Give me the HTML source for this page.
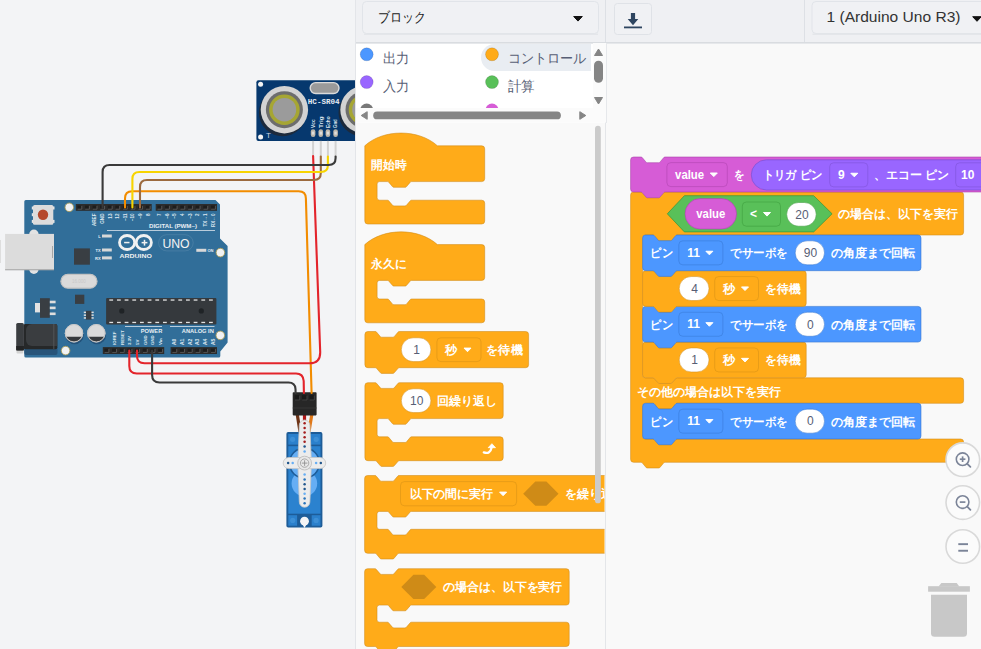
<!DOCTYPE html>
<html><head><meta charset="utf-8"><style>
html,body{margin:0;padding:0;width:981px;height:649px;overflow:hidden;background:#f3f4f6;}
svg{display:block;font-family:"Liberation Sans", sans-serif;}
</style></head><body>
<svg width="981" height="649" viewBox="0 0 981 649">
<rect x="0" y="0" width="981" height="649" fill="#f3f4f6"/>
<g>
<rect x="256.4" y="80.2" width="130" height="60.7" rx="2" fill="#06386e"/>
<circle cx="260.6" cy="84.2" r="2.5" fill="#f4f4f4"/>
<circle cx="260.6" cy="137" r="2.5" fill="#f4f4f4"/>
<circle cx="282.59999999999997" cy="112.6" r="23.7" fill="#1c2a3c"/>
<circle cx="284.4" cy="109.7" r="23.7" fill="#d3d3d3"/>
<circle cx="284.4" cy="109.7" r="18.5" fill="#6d6d6d"/>
<circle cx="284.4" cy="109.7" r="15.3" fill="#a6a633"/>
<circle cx="284.4" cy="109.7" r="11.8" fill="#9b9b9b"/>
<circle cx="362.2" cy="112.6" r="23.7" fill="#1c2a3c"/>
<circle cx="364.0" cy="109.7" r="23.7" fill="#d3d3d3"/>
<circle cx="364.0" cy="109.7" r="18.5" fill="#6d6d6d"/>
<circle cx="364.0" cy="109.7" r="15.3" fill="#a6a633"/>
<circle cx="364.0" cy="109.7" r="11.8" fill="#9b9b9b"/>
<rect x="310.2" y="82.6" width="28.8" height="10.9" rx="5.45" fill="#9a9a9a" stroke="#dadada" stroke-width="1.4"/>
<text x="307.8" y="103.6" font-family="Liberation Mono, monospace" font-size="7.6" font-weight="bold" fill="#e8ecf2" textLength="31.8" lengthAdjust="spacingAndGlyphs">HC-SR04</text>
<text x="266" y="137.5" font-size="8" fill="#c9d3df">T</text>
<text transform="translate(314.8,128) rotate(-90)" font-size="4.6" font-weight="bold" fill="#dfe6ee" textLength="8.7" lengthAdjust="spacingAndGlyphs">Vcc</text>
<rect x="310.8" y="129.3" width="4.6" height="7.6" rx="2.2" fill="#bdb6aa"/>
<rect x="311.90000000000003" y="131.6" width="2.4" height="3" fill="#dedede"/>
<rect x="312.1" y="140.9" width="2" height="16" fill="#d2d2d2"/>
<text transform="translate(322.5,128) rotate(-90)" font-size="4.6" font-weight="bold" fill="#dfe6ee" textLength="11.6" lengthAdjust="spacingAndGlyphs">Trig</text>
<rect x="318.5" y="129.3" width="4.6" height="7.6" rx="2.2" fill="#bdb6aa"/>
<rect x="319.6" y="131.6" width="2.4" height="3" fill="#dedede"/>
<rect x="319.8" y="140.9" width="2" height="16" fill="#d2d2d2"/>
<text transform="translate(329.59999999999997,128) rotate(-90)" font-size="4.6" font-weight="bold" fill="#dfe6ee" textLength="11.6" lengthAdjust="spacingAndGlyphs">Echo</text>
<rect x="325.59999999999997" y="129.3" width="4.6" height="7.6" rx="2.2" fill="#bdb6aa"/>
<rect x="326.7" y="131.6" width="2.4" height="3" fill="#dedede"/>
<rect x="326.9" y="140.9" width="2" height="16" fill="#d2d2d2"/>
<text transform="translate(337.3,128) rotate(-90)" font-size="4.6" font-weight="bold" fill="#dfe6ee" textLength="8.7" lengthAdjust="spacingAndGlyphs">Gnd</text>
<rect x="333.3" y="129.3" width="4.6" height="7.6" rx="2.2" fill="#bdb6aa"/>
<rect x="334.40000000000003" y="131.6" width="2.4" height="3" fill="#dedede"/>
<rect x="334.6" y="140.9" width="2" height="16" fill="#d2d2d2"/>
</g>
<path d="M25.8,200 H215.5 L220,204.5 V238.6 L227.6,246.1 V342.6 L220.3,351.5 V356 a1.5,1.5 0 0 1 -1.5,1.5 H25.8 a1.5,1.5 0 0 1 -1.5,-1.5 V201.5 a1.5,1.5 0 0 1 1.5,-1.5 Z" fill="#316e99"/>
<rect x="75.8" y="204" width="75.9" height="6.8" fill="#2c2c2c"/>
<rect x="77.4" y="205.5" width="4.39" height="3.8" fill="#1d1d1d"/>
<path d="M77.6,209.2 H81.79 V205.8" fill="none" stroke="#5a5a5a" stroke-width="0.9"/>
<rect x="84.99" y="205.5" width="4.39" height="3.8" fill="#1d1d1d"/>
<path d="M85.19,209.2 H89.38 V205.8" fill="none" stroke="#5a5a5a" stroke-width="0.9"/>
<rect x="92.58" y="205.5" width="4.39" height="3.8" fill="#1d1d1d"/>
<path d="M92.78,209.2 H96.97 V205.8" fill="none" stroke="#5a5a5a" stroke-width="0.9"/>
<rect x="100.17" y="205.5" width="4.39" height="3.8" fill="#1d1d1d"/>
<path d="M100.37,209.2 H104.56 V205.8" fill="none" stroke="#5a5a5a" stroke-width="0.9"/>
<rect x="107.76" y="205.5" width="4.39" height="3.8" fill="#1d1d1d"/>
<path d="M107.96,209.2 H112.15 V205.8" fill="none" stroke="#5a5a5a" stroke-width="0.9"/>
<rect x="115.35" y="205.5" width="4.39" height="3.8" fill="#1d1d1d"/>
<path d="M115.55,209.2 H119.74 V205.8" fill="none" stroke="#5a5a5a" stroke-width="0.9"/>
<rect x="122.94" y="205.5" width="4.39" height="3.8" fill="#1d1d1d"/>
<path d="M123.14,209.2 H127.33 V205.8" fill="none" stroke="#5a5a5a" stroke-width="0.9"/>
<rect x="130.53" y="205.5" width="4.39" height="3.8" fill="#1d1d1d"/>
<path d="M130.73,209.2 H134.92 V205.8" fill="none" stroke="#5a5a5a" stroke-width="0.9"/>
<rect x="138.12" y="205.5" width="4.39" height="3.8" fill="#1d1d1d"/>
<path d="M138.32,209.2 H142.51 V205.8" fill="none" stroke="#5a5a5a" stroke-width="0.9"/>
<rect x="145.71" y="205.5" width="4.39" height="3.8" fill="#1d1d1d"/>
<path d="M145.91,209.2 H150.1 V205.8" fill="none" stroke="#5a5a5a" stroke-width="0.9"/>
<rect x="155.7" y="204" width="61.3" height="6.8" fill="#2c2c2c"/>
<rect x="157.3" y="205.5" width="4.46" height="3.8" fill="#1d1d1d"/>
<path d="M157.5,209.2 H161.76 V205.8" fill="none" stroke="#5a5a5a" stroke-width="0.9"/>
<rect x="164.96" y="205.5" width="4.46" height="3.8" fill="#1d1d1d"/>
<path d="M165.16,209.2 H169.42 V205.8" fill="none" stroke="#5a5a5a" stroke-width="0.9"/>
<rect x="172.62" y="205.5" width="4.46" height="3.8" fill="#1d1d1d"/>
<path d="M172.82,209.2 H177.09 V205.8" fill="none" stroke="#5a5a5a" stroke-width="0.9"/>
<rect x="180.29" y="205.5" width="4.46" height="3.8" fill="#1d1d1d"/>
<path d="M180.49,209.2 H184.75 V205.8" fill="none" stroke="#5a5a5a" stroke-width="0.9"/>
<rect x="187.95" y="205.5" width="4.46" height="3.8" fill="#1d1d1d"/>
<path d="M188.15,209.2 H192.41 V205.8" fill="none" stroke="#5a5a5a" stroke-width="0.9"/>
<rect x="195.61" y="205.5" width="4.46" height="3.8" fill="#1d1d1d"/>
<path d="M195.81,209.2 H200.07 V205.8" fill="none" stroke="#5a5a5a" stroke-width="0.9"/>
<rect x="203.28" y="205.5" width="4.46" height="3.8" fill="#1d1d1d"/>
<path d="M203.48,209.2 H207.74 V205.8" fill="none" stroke="#5a5a5a" stroke-width="0.9"/>
<rect x="210.94" y="205.5" width="4.46" height="3.8" fill="#1d1d1d"/>
<path d="M211.14,209.2 H215.4 V205.8" fill="none" stroke="#5a5a5a" stroke-width="0.9"/>
<rect x="102.8" y="347.1" width="61.4" height="6.9" fill="#2c2c2c"/>
<rect x="104.4" y="348.6" width="4.47" height="3.9" fill="#1d1d1d"/>
<path d="M104.6,352.4 H108.88 V348.9" fill="none" stroke="#5a5a5a" stroke-width="0.9"/>
<rect x="112.07" y="348.6" width="4.47" height="3.9" fill="#1d1d1d"/>
<path d="M112.27,352.4 H116.55 V348.9" fill="none" stroke="#5a5a5a" stroke-width="0.9"/>
<rect x="119.75" y="348.6" width="4.47" height="3.9" fill="#1d1d1d"/>
<path d="M119.95,352.4 H124.22 V348.9" fill="none" stroke="#5a5a5a" stroke-width="0.9"/>
<rect x="127.42" y="348.6" width="4.47" height="3.9" fill="#1d1d1d"/>
<path d="M127.62,352.4 H131.9 V348.9" fill="none" stroke="#5a5a5a" stroke-width="0.9"/>
<rect x="135.1" y="348.6" width="4.47" height="3.9" fill="#1d1d1d"/>
<path d="M135.3,352.4 H139.58 V348.9" fill="none" stroke="#5a5a5a" stroke-width="0.9"/>
<rect x="142.77" y="348.6" width="4.47" height="3.9" fill="#1d1d1d"/>
<path d="M142.97,352.4 H147.25 V348.9" fill="none" stroke="#5a5a5a" stroke-width="0.9"/>
<rect x="150.45" y="348.6" width="4.47" height="3.9" fill="#1d1d1d"/>
<path d="M150.65,352.4 H154.93 V348.9" fill="none" stroke="#5a5a5a" stroke-width="0.9"/>
<rect x="158.12" y="348.6" width="4.47" height="3.9" fill="#1d1d1d"/>
<path d="M158.32,352.4 H162.6 V348.9" fill="none" stroke="#5a5a5a" stroke-width="0.9"/>
<rect x="170.6" y="347.1" width="46.4" height="6.9" fill="#2c2c2c"/>
<rect x="172.2" y="348.6" width="4.53" height="3.9" fill="#1d1d1d"/>
<path d="M172.4,352.4 H176.73 V348.9" fill="none" stroke="#5a5a5a" stroke-width="0.9"/>
<rect x="179.93" y="348.6" width="4.53" height="3.9" fill="#1d1d1d"/>
<path d="M180.13,352.4 H184.47 V348.9" fill="none" stroke="#5a5a5a" stroke-width="0.9"/>
<rect x="187.67" y="348.6" width="4.53" height="3.9" fill="#1d1d1d"/>
<path d="M187.87,352.4 H192.2 V348.9" fill="none" stroke="#5a5a5a" stroke-width="0.9"/>
<rect x="195.4" y="348.6" width="4.53" height="3.9" fill="#1d1d1d"/>
<path d="M195.6,352.4 H199.93 V348.9" fill="none" stroke="#5a5a5a" stroke-width="0.9"/>
<rect x="203.13" y="348.6" width="4.53" height="3.9" fill="#1d1d1d"/>
<path d="M203.33,352.4 H207.67 V348.9" fill="none" stroke="#5a5a5a" stroke-width="0.9"/>
<rect x="210.87" y="348.6" width="4.53" height="3.9" fill="#1d1d1d"/>
<path d="M211.07,352.4 H215.4 V348.9" fill="none" stroke="#5a5a5a" stroke-width="0.9"/>
<circle cx="69.3" cy="207.3" r="4.3" fill="#f1f2f3" stroke="#a69a58" stroke-width="0.9"/>
<circle cx="220.4" cy="252.6" r="4.3" fill="#f1f2f3" stroke="#a69a58" stroke-width="0.9"/>
<circle cx="220.3" cy="335.4" r="4.3" fill="#f1f2f3" stroke="#a69a58" stroke-width="0.9"/>
<circle cx="65.6" cy="350.6" r="4.3" fill="#f1f2f3" stroke="#a69a58" stroke-width="0.9"/>
<rect x="31.8" y="206.5" width="2" height="3" fill="#e6e6e6"/><rect x="31.8" y="213.2" width="2" height="3" fill="#e6e6e6"/><rect x="31.8" y="219.9" width="2" height="3" fill="#e6e6e6"/>
<rect x="52.5" y="206.5" width="2" height="3" fill="#e6e6e6"/><rect x="52.5" y="219.9" width="2" height="3" fill="#e6e6e6"/>
<rect x="33" y="205.1" width="20.3" height="19.7" rx="1.5" fill="#dcdcdc"/>
<circle cx="43" cy="214.8" r="5.2" fill="#b5482b"/>
<circle cx="33.9" cy="234.2" r="4.7" fill="#e2e2e2"/><circle cx="33.9" cy="269.3" r="4.7" fill="#e2e2e2"/>
<rect x="5.1" y="233.9" width="48.9" height="36" fill="#dcdcdc"/>
<rect x="5.1" y="269.2" width="48.9" height="1.1" fill="#a9a9a9"/>
<rect x="52" y="246" width="0.9" height="12" fill="#a0a0a0"/>
<rect x="0" y="240" width="1" height="23" fill="#dedede"/>
<rect x="74" y="248.4" width="15.9" height="16.3" fill="#393e43"/>
<rect x="75" y="294.7" width="9.3" height="9.2" fill="#393e43"/>
<rect x="102" y="234.5" width="9.8" height="3" fill="#d8d8d8"/>
<text x="100.6" y="237.6" font-size="4" font-weight="bold" fill="#e6eef5" text-anchor="end">L</text>
<rect x="102" y="248.5" width="9.8" height="3" fill="#d8d8d8"/>
<text x="100.6" y="251.6" font-size="4" font-weight="bold" fill="#e6eef5" text-anchor="end">TX</text>
<rect x="102" y="256.4" width="9.8" height="3" fill="#d8d8d8"/>
<text x="100.6" y="259.5" font-size="4" font-weight="bold" fill="#e6eef5" text-anchor="end">RX</text>
<rect x="196.3" y="248.8" width="10" height="3" fill="#d8d8d8"/>
<text x="207.5" y="251.9" font-size="4" font-weight="bold" fill="#e6eef5">ON</text>
<rect x="60.9" y="274.3" width="36.1" height="13.9" rx="6.95" fill="#dadada" stroke="#c2c2c2" stroke-width="1.2"/>
<text x="79" y="283" font-size="4.5" fill="#c8c8c8" text-anchor="middle">16.000</text>
<rect x="35" y="303" width="5.2" height="9.4" fill="#e2e2e2"/>
<rect x="40" y="298.2" width="9.8" height="19.6" fill="#393e43"/>
<rect x="49.8" y="300.7" width="5.8" height="2.6" fill="#dedede"/>
<rect x="49.8" y="306.6" width="5.8" height="2.6" fill="#dedede"/>
<rect x="49.8" y="312.5" width="5.8" height="2.6" fill="#dedede"/>
<rect x="85.8" y="310.8" width="5.8" height="8.8" fill="#393e43"/>
<rect x="83.8" y="311.6" width="2.2" height="1.5" fill="#dedede"/><rect x="91.5" y="311.6" width="2.2" height="1.5" fill="#dedede"/>
<rect x="83.8" y="314.4" width="2.2" height="1.5" fill="#dedede"/><rect x="91.5" y="314.4" width="2.2" height="1.5" fill="#dedede"/>
<rect x="83.8" y="317.2" width="2.2" height="1.5" fill="#dedede"/><rect x="91.5" y="317.2" width="2.2" height="1.5" fill="#dedede"/>
<rect x="24.3" y="345" width="33.2" height="10" rx="2" fill="#285479"/>
<rect x="16.5" y="349" width="6.8" height="4.6" rx="1" fill="#d2d2d2"/>
<rect x="23.5" y="324" width="33.8" height="25.2" rx="1.8" fill="#262829"/>
<path d="M32,324 H55.5 a1.8,1.8 0 0 1 1.8,1.8 V346 H32 a6,6 0 0 1 -6,-6 V330 a6,6 0 0 1 6,-6 Z" fill="#3a3d40"/>
<rect x="53.4" y="324" width="0.9" height="25" fill="#55585b"/>
<rect x="16.2" y="323" width="7.7" height="27.4" rx="1.5" fill="#3a3d40"/>
<rect x="16.2" y="346" width="7.7" height="4.4" fill="#232425"/>
<circle cx="74.6" cy="335" r="9.2" fill="#23527a"/>
<circle cx="74.0" cy="333.2" r="9.2" fill="#dadada"/>
<path d="M65.7,336.8 H82.3 A9.2,9.2 0 0 1 65.7,336.8 Z" fill="#36393c"/>
<circle cx="74.0" cy="333.2" r="8.7" fill="none" stroke="#c6c6c6" stroke-width="1"/>
<circle cx="96.89999999999999" cy="335" r="9.2" fill="#23527a"/>
<circle cx="96.3" cy="333.2" r="9.2" fill="#dadada"/>
<path d="M88,336.8 H104.6 A9.2,9.2 0 0 1 88,336.8 Z" fill="#36393c"/>
<circle cx="96.3" cy="333.2" r="8.7" fill="none" stroke="#c6c6c6" stroke-width="1"/>
<rect x="106.1" y="298.1" width="110.3" height="26.3" rx="1" fill="#35393d"/>
<rect x="109.3" y="299.4" width="3.8" height="1.3" fill="#e2e2e2"/>
<rect x="109.3" y="321.8" width="3.8" height="1.3" fill="#e2e2e2"/>
<rect x="116.97" y="299.4" width="3.8" height="1.3" fill="#e2e2e2"/>
<rect x="116.97" y="321.8" width="3.8" height="1.3" fill="#e2e2e2"/>
<rect x="124.64" y="299.4" width="3.8" height="1.3" fill="#e2e2e2"/>
<rect x="124.64" y="321.8" width="3.8" height="1.3" fill="#e2e2e2"/>
<rect x="132.31" y="299.4" width="3.8" height="1.3" fill="#e2e2e2"/>
<rect x="132.31" y="321.8" width="3.8" height="1.3" fill="#e2e2e2"/>
<rect x="139.98" y="299.4" width="3.8" height="1.3" fill="#e2e2e2"/>
<rect x="139.98" y="321.8" width="3.8" height="1.3" fill="#e2e2e2"/>
<rect x="147.65" y="299.4" width="3.8" height="1.3" fill="#e2e2e2"/>
<rect x="147.65" y="321.8" width="3.8" height="1.3" fill="#e2e2e2"/>
<rect x="155.32" y="299.4" width="3.8" height="1.3" fill="#e2e2e2"/>
<rect x="155.32" y="321.8" width="3.8" height="1.3" fill="#e2e2e2"/>
<rect x="162.99" y="299.4" width="3.8" height="1.3" fill="#e2e2e2"/>
<rect x="162.99" y="321.8" width="3.8" height="1.3" fill="#e2e2e2"/>
<rect x="170.66" y="299.4" width="3.8" height="1.3" fill="#e2e2e2"/>
<rect x="170.66" y="321.8" width="3.8" height="1.3" fill="#e2e2e2"/>
<rect x="178.33" y="299.4" width="3.8" height="1.3" fill="#e2e2e2"/>
<rect x="178.33" y="321.8" width="3.8" height="1.3" fill="#e2e2e2"/>
<rect x="186" y="299.4" width="3.8" height="1.3" fill="#e2e2e2"/>
<rect x="186" y="321.8" width="3.8" height="1.3" fill="#e2e2e2"/>
<rect x="193.67" y="299.4" width="3.8" height="1.3" fill="#e2e2e2"/>
<rect x="193.67" y="321.8" width="3.8" height="1.3" fill="#e2e2e2"/>
<rect x="201.34" y="299.4" width="3.8" height="1.3" fill="#e2e2e2"/>
<rect x="201.34" y="321.8" width="3.8" height="1.3" fill="#e2e2e2"/>
<rect x="209.01" y="299.4" width="3.8" height="1.3" fill="#e2e2e2"/>
<rect x="209.01" y="321.8" width="3.8" height="1.3" fill="#e2e2e2"/>
<circle cx="121.8" cy="310.9" r="2.6" fill="#1f2326"/><circle cx="201.3" cy="310.9" r="2.6" fill="#1f2326"/>
<ellipse cx="127.1" cy="242.5" rx="7.6" ry="7.0" fill="none" stroke="#f1f1f1" stroke-width="2.8"/>
<ellipse cx="143.8" cy="242.5" rx="7.6" ry="7.0" fill="none" stroke="#f1f1f1" stroke-width="2.8"/>
<rect x="124.1" y="241.8" width="5.4" height="1.5" fill="#f1f1f1"/>
<rect x="141.6" y="241.9" width="5.8" height="1.5" fill="#f1f1f1"/><rect x="143.75" y="239.8" width="1.5" height="5.8" fill="#f1f1f1"/>
<text x="119.6" y="257.7" font-size="5.6" font-weight="bold" fill="#f1f1f1" textLength="32.3" lengthAdjust="spacingAndGlyphs">ARDUINO</text>
<rect x="158.6" y="234.7" width="34.6" height="16.2" rx="8.1" fill="none" stroke="#ffffff" stroke-opacity="0.1" stroke-width="1"/>
<text x="162.4" y="247.7" font-size="13.6" fill="#f3f3f3" textLength="27.2" lengthAdjust="spacingAndGlyphs">UNO</text>
<text transform="translate(96.38,213.5) rotate(-90)" font-size="4.6" font-weight="bold" fill="#dfe8f0" text-anchor="end">AREF</text>
<text transform="translate(103.97,213.5) rotate(-90)" font-size="4.6" font-weight="bold" fill="#dfe8f0" text-anchor="end">GND</text>
<text transform="translate(111.56,213.5) rotate(-90)" font-size="4.6" font-weight="bold" fill="#dfe8f0" text-anchor="end">13</text>
<text transform="translate(119.15,213.5) rotate(-90)" font-size="4.6" font-weight="bold" fill="#dfe8f0" text-anchor="end">12</text>
<text transform="translate(126.74,213.5) rotate(-90)" font-size="4.6" font-weight="bold" fill="#dfe8f0" text-anchor="end">~11</text>
<text transform="translate(134.33,213.5) rotate(-90)" font-size="4.6" font-weight="bold" fill="#dfe8f0" text-anchor="end">~10</text>
<text transform="translate(141.92,213.5) rotate(-90)" font-size="4.6" font-weight="bold" fill="#dfe8f0" text-anchor="end">~9</text>
<text transform="translate(149.51,213.5) rotate(-90)" font-size="4.6" font-weight="bold" fill="#dfe8f0" text-anchor="end">8</text>
<text transform="translate(161.1,213.5) rotate(-90)" font-size="4.6" font-weight="bold" fill="#dfe8f0" text-anchor="end">7</text>
<text transform="translate(168.76,213.5) rotate(-90)" font-size="4.6" font-weight="bold" fill="#dfe8f0" text-anchor="end">~6</text>
<text transform="translate(176.42,213.5) rotate(-90)" font-size="4.6" font-weight="bold" fill="#dfe8f0" text-anchor="end">~5</text>
<text transform="translate(184.08,213.5) rotate(-90)" font-size="4.6" font-weight="bold" fill="#dfe8f0" text-anchor="end">4</text>
<text transform="translate(191.74,213.5) rotate(-90)" font-size="4.6" font-weight="bold" fill="#dfe8f0" text-anchor="end">~3</text>
<text transform="translate(199.4,213.5) rotate(-90)" font-size="4.6" font-weight="bold" fill="#dfe8f0" text-anchor="end">2</text>
<text transform="translate(207.06,213.5) rotate(-90)" font-size="4.6" font-weight="bold" fill="#dfe8f0" text-anchor="end">TX→1</text>
<text transform="translate(214.72,213.5) rotate(-90)" font-size="4.6" font-weight="bold" fill="#dfe8f0" text-anchor="end">RX←0</text>
<text x="173" y="228.3" font-size="5.6" font-weight="bold" fill="#e8eef4" text-anchor="middle" textLength="48" lengthAdjust="spacingAndGlyphs">DIGITAL (PWM~)</text>
<rect x="107" y="230" width="108" height="0.9" fill="#c9d7e3"/>
<text transform="translate(115.87,345) rotate(-90)" font-size="4.4" font-weight="bold" fill="#dfe8f0">IOREF</text>
<text transform="translate(123.54,345) rotate(-90)" font-size="4.4" font-weight="bold" fill="#dfe8f0">RESET</text>
<text transform="translate(131.21,345) rotate(-90)" font-size="4.4" font-weight="bold" fill="#dfe8f0">3.3V</text>
<text transform="translate(138.88,345) rotate(-90)" font-size="4.4" font-weight="bold" fill="#dfe8f0">5V</text>
<text transform="translate(146.55,345) rotate(-90)" font-size="4.4" font-weight="bold" fill="#dfe8f0">GND</text>
<text transform="translate(154.22,345) rotate(-90)" font-size="4.4" font-weight="bold" fill="#dfe8f0">GND</text>
<text transform="translate(161.89,345) rotate(-90)" font-size="4.4" font-weight="bold" fill="#dfe8f0">Vin</text>
<text transform="translate(176.3,345) rotate(-90)" font-size="5" font-weight="bold" fill="#dfe8f0">A0</text>
<text transform="translate(184.03,345) rotate(-90)" font-size="5" font-weight="bold" fill="#dfe8f0">A1</text>
<text transform="translate(191.76,345) rotate(-90)" font-size="5" font-weight="bold" fill="#dfe8f0">A2</text>
<text transform="translate(199.49,345) rotate(-90)" font-size="5" font-weight="bold" fill="#dfe8f0">A3</text>
<text transform="translate(207.22,345) rotate(-90)" font-size="5" font-weight="bold" fill="#dfe8f0">A4</text>
<text transform="translate(214.95,345) rotate(-90)" font-size="5" font-weight="bold" fill="#dfe8f0">A5</text>
<rect x="125" y="326" width="37" height="0.9" fill="#c9d7e3"/><rect x="170" y="326" width="44.5" height="0.9" fill="#c9d7e3"/>
<text x="151.5" y="333" font-size="6" font-weight="bold" fill="#e8eef4" text-anchor="middle" textLength="21.5" lengthAdjust="spacingAndGlyphs">POWER</text>
<text x="197.8" y="333" font-size="6" font-weight="bold" fill="#e8eef4" text-anchor="middle" textLength="32" lengthAdjust="spacingAndGlyphs">ANALOG IN</text>
<path d="M297.2,414 L300.2,433" stroke="#6e3417" stroke-width="3.2"/>
<path d="M311.9,414 L308.8,433" stroke="#e07818" stroke-width="3.2"/>
<path d="M304.5,414 V426" stroke="#b01818" stroke-width="3.2"/>
<rect x="286.4" y="432.1" width="36" height="95.4" rx="1.8" fill="#1d5c98"/>
<rect x="288.3" y="434" width="32.2" height="10.6" fill="#2b80cc"/>
<circle cx="292.6" cy="439.3" r="2.6" fill="#3d8fd6"/><circle cx="316.2" cy="439.3" r="2.6" fill="#3d8fd6"/>
<rect x="288.3" y="446.2" width="32.2" height="67.5" fill="#2b82cf"/>
<circle cx="304.4" cy="483.5" r="12.8" fill="#66aef4"/>
<circle cx="304.4" cy="463.1" r="15" fill="#66aef4" stroke="#1d5c98" stroke-width="1.6"/>
<rect x="288.3" y="515.2" width="8.8" height="10.5" fill="#2b80cc"/><rect x="311.7" y="515.2" width="8.8" height="10.5" fill="#2b80cc"/>
<circle cx="292.7" cy="520.4" r="2.6" fill="#3d8fd6"/><circle cx="316.1" cy="520.4" r="2.6" fill="#3d8fd6"/>
<circle cx="304.5" cy="521.2" r="4.4" fill="#f3f4f6"/><path d="M302.3,524 L304.5,528 L306.7,524 Z" fill="#f3f4f6"/>
<path d="M299.3,425.3 A5.3,5.3 0 0 1 309.9,425.3 L311.4,463 L309.9,501.9 A5.3,5.3 0 0 1 299.3,501.9 L297.8,463 Z" fill="#ececec" stroke="#c6c6c6" stroke-width="0.8"/>
<rect x="283.2" y="457.5" width="42.5" height="11.1" rx="5.55" fill="#ececec" stroke="#c6c6c6" stroke-width="0.8"/>
<rect x="298.4" y="458" width="12.4" height="10.1" fill="#ececec"/>
<circle cx="304.6" cy="463.1" r="6.9" fill="#e8e8e8" stroke="#b8b8b8" stroke-width="0.8"/>
<circle cx="304.6" cy="463.1" r="4.2" fill="none" stroke="#999" stroke-width="0.8"/>
<path d="M301.8,463.1 h5.6 M304.6,460.3 v5.6" stroke="#888" stroke-width="0.8"/>
<circle cx="304.6" cy="423.3" r="1.25" fill="#a41d1d"/>
<circle cx="304.6" cy="427.9" r="1.25" fill="#a41d1d"/>
<circle cx="304.6" cy="432.6" r="1.25" fill="#a41d1d"/>
<circle cx="304.6" cy="437.2" r="1.25" fill="#a41d1d"/>
<circle cx="304.6" cy="441.8" r="1.25" fill="#a41d1d"/>
<circle cx="304.6" cy="446.4" r="1.25" fill="#21568c"/>
<circle cx="304.6" cy="451.5" r="1.25" fill="#66aef4"/>
<circle cx="304.6" cy="474.6" r="1.25" fill="#66aef4"/>
<circle cx="304.6" cy="479.4" r="1.25" fill="#2a74bb"/>
<circle cx="304.6" cy="484.3" r="1.25" fill="#21568c"/>
<circle cx="304.6" cy="489" r="1.25" fill="#21568c"/>
<circle cx="304.6" cy="493.7" r="1.25" fill="#66aef4"/>
<circle cx="304.6" cy="498.4" r="1.25" fill="#2a74bb"/>
<circle cx="304.6" cy="503.2" r="1.25" fill="#2a74bb"/>
<circle cx="288.1" cy="463.1" r="1.25" fill="#21568c"/>
<circle cx="292.7" cy="463.1" r="1.25" fill="#66aef4"/>
<circle cx="316.1" cy="463.1" r="1.25" fill="#66aef4"/>
<circle cx="320.8" cy="463.1" r="1.25" fill="#21568c"/>
<rect x="292.7" y="392.3" width="23.9" height="23.1" rx="0.8" fill="#272727"/>
<rect x="294.7" y="395.2" width="5.2" height="5" fill="#1a1a1a"/>
<path d="M294.90000000000003,400 H299.7 V395.5" fill="none" stroke="#4a4a4a" stroke-width="0.8"/>
<rect x="302.0" y="395.2" width="5.2" height="5" fill="#1a1a1a"/>
<path d="M302.20000000000005,400 H307.0 V395.5" fill="none" stroke="#4a4a4a" stroke-width="0.8"/>
<rect x="309.29999999999995" y="395.2" width="5.2" height="5" fill="#1a1a1a"/>
<path d="M309.5,400 H314.29999999999995 V395.5" fill="none" stroke="#4a4a4a" stroke-width="0.8"/>
<rect x="292.7" y="407.6" width="23.9" height="0.8" fill="#3a3a3a"/>
<path d="M125,207.5 V198.5 Q125,191.3 132.2,191.3 H298.6 Q305.9,191.3 305.9,198.6 L311.6,393" stroke="#f28c00" fill="none" stroke-width="2.1" stroke-linecap="round" stroke-linejoin="round"/>
<path d="M313.1,156 L320.2,352 Q320.4,363.3 309.5,363.3 H144.5 Q137,363.3 137,355.8 V350.5" stroke="#e3242b" fill="none" stroke-width="2.1" stroke-linecap="round" stroke-linejoin="round"/>
<path d="M129.3,350.5 V366 Q129.3,373.5 136.8,373.5 H296 Q303.2,373.5 303.7,381 L303.9,393" stroke="#e3242b" fill="none" stroke-width="2.1" stroke-linecap="round" stroke-linejoin="round"/>
<path d="M152.1,350.5 V375 Q152.1,382.5 159.6,382.5 H288.5 Q295.2,382.5 295.5,389 L295.6,393" stroke="#3a3a3a" fill="none" stroke-width="2.1" stroke-linecap="round" stroke-linejoin="round"/>
<path d="M320.8,156.5 V173 Q320.8,180 313.8,180 H147 Q140,180 140,187 V207.5" stroke="#9c6a3e" fill="none" stroke-width="2.1" stroke-linecap="round" stroke-linejoin="round"/>
<path d="M327.9,156.5 V165 Q327.9,172 320.9,172 H139.4 Q132.4,172 132.4,179 V207.5" stroke="#f7d400" fill="none" stroke-width="2.1" stroke-linecap="round" stroke-linejoin="round"/>
<path d="M335.6,156.5 V158 Q335.6,165 328.6,165 H109.6 Q102.6,165 102.6,172 V207.5" stroke="#3a3a3a" fill="none" stroke-width="2.1" stroke-linecap="round" stroke-linejoin="round"/>
<rect x="355" y="0" width="626" height="649" fill="#f9f9f9"/>
<rect x="355" y="0" width="1" height="649" fill="#e3e5e9"/>
<rect x="356" y="0" width="625" height="42" fill="#eff0f3"/>
<rect x="356" y="42" width="625" height="1" fill="#d9dce0"/><rect x="356" y="43" width="625" height="1" fill="#e6e8eb"/>
<rect x="362.5" y="1.5" width="236" height="32" rx="4" fill="#f0f1f4" stroke="#e1e4e9" stroke-width="1"/>
<rect x="364" y="33.5" width="234" height="1.5" fill="#e4e6ea"/>
<text x="377.5" y="22" font-size="14" fill="#222" font-weight="normal" text-anchor="start" textLength="48" lengthAdjust="spacingAndGlyphs" >ブロック</text>
<path d="M573.7,16.5 L582.3,16.5 L578,21.1 Z" fill="#111" stroke="#111" stroke-width="1" stroke-linejoin="round"/>
<rect x="605" y="0" width="1" height="42" fill="#dde0e5"/>
<rect x="614.5" y="3.5" width="37" height="31" rx="3" fill="#f0f1f4" stroke="#dfe2e7" stroke-width="1"/>
<path d="M630.9,13 h4.2 v6 h3.2 l-5.3,6.3 l-5.3,-6.3 h3.2 Z" fill="#2e4560"/>
<rect x="624" y="26.5" width="18" height="1.8" fill="#2e4560"/>
<rect x="804" y="0" width="1" height="42" fill="#dde0e5"/>
<rect x="812" y="1.5" width="180" height="32" rx="4" fill="#f0f1f4" stroke="#e1e4e9" stroke-width="1"/>
<rect x="812.5" y="33.5" width="170" height="1.5" fill="#e4e6ea"/>
<text x="826.5" y="21.5" font-size="14.5" fill="#333" font-weight="normal" text-anchor="start" textLength="134" lengthAdjust="spacingAndGlyphs" >1 (Arduino Uno R3)</text>
<path d="M972.7,16.7 L981.3,16.7 L977,21.3 Z" fill="#111" stroke="#111" stroke-width="1" stroke-linejoin="round"/>
<rect x="356" y="44" width="250" height="79" fill="#ffffff"/>
<rect x="481" y="44" width="110" height="27" rx="13.5" fill="#e9edf2"/>
<rect x="495" y="44" width="96" height="27" fill="#e9edf2"/>
<circle cx="366.7" cy="54.3" r="6.5" fill="#4C97FF" stroke="#000" stroke-opacity="0.12" stroke-width="1"/>
<text x="382.5" y="63.3" font-size="14" fill="#575E75" font-weight="normal" text-anchor="start" textLength="26.5" lengthAdjust="spacingAndGlyphs" >出力</text>
<circle cx="366.7" cy="82.1" r="6.5" fill="#9966FF" stroke="#000" stroke-opacity="0.12" stroke-width="1"/>
<text x="382.5" y="91.1" font-size="14" fill="#575E75" font-weight="normal" text-anchor="start" textLength="26.5" lengthAdjust="spacingAndGlyphs" >入力</text>
<circle cx="492" cy="54.3" r="6.5" fill="#FFAB19" stroke="#000" stroke-opacity="0.12" stroke-width="1"/>
<text x="507.8" y="63.3" font-size="14" fill="#575E75" font-weight="normal" text-anchor="start" textLength="78.5" lengthAdjust="spacingAndGlyphs" >コントロール</text>
<circle cx="492" cy="82.1" r="6.5" fill="#59C059" stroke="#000" stroke-opacity="0.12" stroke-width="1"/>
<text x="507.8" y="91.1" font-size="14" fill="#575E75" font-weight="normal" text-anchor="start" textLength="27" lengthAdjust="spacingAndGlyphs" >計算</text>
<clipPath id="catclip"><rect x="356" y="43" width="237" height="65"/></clipPath>
<g clip-path="url(#catclip)">
<circle cx="366.7" cy="110" r="6.5" fill="#787878"/>
<circle cx="492" cy="110" r="6.5" fill="#D65CD6"/>
</g>
<rect x="356" y="108" width="237" height="14" fill="#fbfbfb"/>
<rect x="593" y="43" width="13" height="79" fill="#fbfbfb"/>
<path d="M594.5,55.5 L598.5,49 L602.5,55.5 Z" fill="#858585" stroke="#858585" stroke-linejoin="round"/>
<rect x="594" y="60.8" width="9" height="22" rx="4.5" fill="#858585"/>
<path d="M594.5,97.5 L598.5,104 L602.5,97.5 Z" fill="#858585" stroke="#858585" stroke-linejoin="round"/>
<path d="M367.2,111.7 L361.2,115.5 L367.2,119.3 Z" fill="#858585" stroke="#858585" stroke-linejoin="round"/>
<rect x="373.2" y="111.5" width="187.7" height="7.8" rx="3.9" fill="#858585"/>
<path d="M579.8,111.7 L585.8,115.5 L579.8,119.3 Z" fill="#858585" stroke="#858585" stroke-linejoin="round"/>
<rect x="606" y="43" width="1" height="80" fill="#e6e8eb"/>
<rect x="356" y="122.5" width="249" height="527" fill="#f9f9f9"/>
<rect x="605" y="122.5" width="1" height="527" fill="#e4e6e9"/>
<clipPath id="flyclip"><rect x="356" y="122.5" width="248.5" height="527"/></clipPath>
<g clip-path="url(#flyclip)">
<path d="M364.8,145.8 c18.5,-17 54,-17 72.6,0 H481.7 a3.0,3.0 0 0 1 3.0,3.0 V178.6 a3.0,3.0 0 0 1 -3.0,3.0 H411.6 c-0.9,0 -1.2,0.35 -1.5,0.8 l-3.5,4.1 c-0.3,0.45 -0.6,0.8 -1.5,0.8 h-11.2 c-0.9,0 -1.2,-0.35 -1.5,-0.8 l-3.5,-4.1 c-0.3,-0.45 -0.6,-0.8 -1.5,-0.8 H379.6 a2.5,2.5 0 0 0 -2.5,2.5 V197.7 a2.5,2.5 0 0 0 2.5,2.5 H387.4 c0.9,0 1.2,0.35 1.5,0.8 l3.5,4.1 c0.3,0.45 0.6,0.8 1.5,0.8 h11.2 c0.9,0 1.2,-0.35 1.5,-0.8 l3.5,-4.1 c0.3,-0.45 0.6,-0.8 1.5,-0.8 H481.7 a3.0,3.0 0 0 1 3.0,3.0 V221 a3.0,3.0 0 0 1 -3.0,3.0 H367.8 a3.0,3.0 0 0 1 -3.0,-3.0 Z" fill="#FFAB19" stroke="#CF8B17" stroke-width="1" stroke-opacity="0.55"/>
<text x="371.3" y="169" font-size="12" fill="#fff" font-weight="bold" text-anchor="start" textLength="35.3" lengthAdjust="spacingAndGlyphs" >開始時</text>
<path d="M364.8,244.6 c18.5,-17 54,-17 72.6,0 H481.7 a3.0,3.0 0 0 1 3.0,3.0 V277.4 a3.0,3.0 0 0 1 -3.0,3.0 H411.6 c-0.9,0 -1.2,0.35 -1.5,0.8 l-3.5,4.1 c-0.3,0.45 -0.6,0.8 -1.5,0.8 h-11.2 c-0.9,0 -1.2,-0.35 -1.5,-0.8 l-3.5,-4.1 c-0.3,-0.45 -0.6,-0.8 -1.5,-0.8 H379.6 a2.5,2.5 0 0 0 -2.5,2.5 V296.5 a2.5,2.5 0 0 0 2.5,2.5 H387.4 c0.9,0 1.2,0.35 1.5,0.8 l3.5,4.1 c0.3,0.45 0.6,0.8 1.5,0.8 h11.2 c0.9,0 1.2,-0.35 1.5,-0.8 l3.5,-4.1 c0.3,-0.45 0.6,-0.8 1.5,-0.8 H481.7 a3.0,3.0 0 0 1 3.0,3.0 V319.8 a3.0,3.0 0 0 1 -3.0,3.0 H367.8 a3.0,3.0 0 0 1 -3.0,-3.0 Z" fill="#FFAB19" stroke="#CF8B17" stroke-width="1" stroke-opacity="0.55"/>
<text x="371.3" y="267.8" font-size="12" fill="#fff" font-weight="bold" text-anchor="start" textLength="35.3" lengthAdjust="spacingAndGlyphs" >永久に</text>
<path d="M364.9,334.5 a3.0,3.0 0 0 1 3.0,-3.0 H375.2 c0.9,0 1.2,0.35 1.5,0.8 l3.5,4.1 c0.3,0.45 0.6,0.8 1.5,0.8 h11.2 c0.9,0 1.2,-0.35 1.5,-0.8 l3.5,-4.1 c0.3,-0.45 0.6,-0.8 1.5,-0.8 H525.6 a3.0,3.0 0 0 1 3.0,3.0 V364.7 a3.0,3.0 0 0 1 -3.0,3.0 H399.4 c-0.9,0 -1.2,0.35 -1.5,0.8 l-3.5,4.1 c-0.3,0.45 -0.6,0.8 -1.5,0.8 h-11.2 c-0.9,0 -1.2,-0.35 -1.5,-0.8 l-3.5,-4.1 c-0.3,-0.45 -0.6,-0.8 -1.5,-0.8 H367.9 a3.0,3.0 0 0 1 -3.0,-3.0 Z" fill="#FFAB19" stroke="#CF8B17" stroke-width="1" stroke-opacity="0.55"/>
<rect x="401.3" y="337.8" width="29.6" height="23.8" rx="11.9" fill="#fff" stroke="#CF8B17" stroke-opacity="0.5" stroke-width="1"/>
<text x="416.7" y="354" font-size="12" fill="#575E75" font-weight="normal" text-anchor="middle" >1</text>
<rect x="436.9" y="337.8" width="44.1" height="23.8" rx="4" fill="#FFAB19" stroke="#CF8B17" stroke-opacity="0.45" stroke-width="1"/>
<text x="445" y="353.9" font-size="12" fill="#fff" font-weight="bold" text-anchor="start" textLength="12.3" lengthAdjust="spacingAndGlyphs" >秒</text>
<path d="M464,348.1 L471,348.1 L467.5,351.7 Z" fill="#fff" stroke="#fff" stroke-width="1" stroke-linejoin="round"/>
<text x="486.3" y="354.1" font-size="12" fill="#fff" font-weight="bold" text-anchor="start" textLength="36.4" lengthAdjust="spacingAndGlyphs" >を待機</text>
<path d="M364.9,385.7 a3.0,3.0 0 0 1 3.0,-3.0 H375.2 c0.9,0 1.2,0.35 1.5,0.8 l3.5,4.1 c0.3,0.45 0.6,0.8 1.5,0.8 h11.2 c0.9,0 1.2,-0.35 1.5,-0.8 l3.5,-4.1 c0.3,-0.45 0.6,-0.8 1.5,-0.8 H500.2 a3.0,3.0 0 0 1 3.0,3.0 V415.6 a3.0,3.0 0 0 1 -3.0,3.0 H411.6 c-0.9,0 -1.2,0.35 -1.5,0.8 l-3.5,4.1 c-0.3,0.45 -0.6,0.8 -1.5,0.8 h-11.2 c-0.9,0 -1.2,-0.35 -1.5,-0.8 l-3.5,-4.1 c-0.3,-0.45 -0.6,-0.8 -1.5,-0.8 H379.6 a2.5,2.5 0 0 0 -2.5,2.5 V434.3 a2.5,2.5 0 0 0 2.5,2.5 H387.4 c0.9,0 1.2,0.35 1.5,0.8 l3.5,4.1 c0.3,0.45 0.6,0.8 1.5,0.8 h11.2 c0.9,0 1.2,-0.35 1.5,-0.8 l3.5,-4.1 c0.3,-0.45 0.6,-0.8 1.5,-0.8 H500.2 a3.0,3.0 0 0 1 3.0,3.0 V457.7 a3.0,3.0 0 0 1 -3.0,3.0 H399.4 c-0.9,0 -1.2,0.35 -1.5,0.8 l-3.5,4.1 c-0.3,0.45 -0.6,0.8 -1.5,0.8 h-11.2 c-0.9,0 -1.2,-0.35 -1.5,-0.8 l-3.5,-4.1 c-0.3,-0.45 -0.6,-0.8 -1.5,-0.8 H367.9 a3.0,3.0 0 0 1 -3.0,-3.0 Z" fill="#FFAB19" stroke="#CF8B17" stroke-width="1" stroke-opacity="0.55"/>
<rect x="401.3" y="388.8" width="29.6" height="23.8" rx="11.9" fill="#fff" stroke="#CF8B17" stroke-opacity="0.5" stroke-width="1"/>
<text x="416.7" y="405" font-size="12" fill="#575E75" font-weight="normal" text-anchor="middle" >10</text>
<text x="436.9" y="405.1" font-size="12" fill="#fff" font-weight="bold" text-anchor="start" textLength="59.8" lengthAdjust="spacingAndGlyphs" >回繰り返し</text>
<path d="M483.8,452.4 Q490.2,454.6 491.7,447.2" fill="none" stroke="#fff" stroke-width="2.3" stroke-linecap="round"/>
<path d="M488.2,447.7 L491.9,443.7 L495.5,447.7 Z" fill="#fff" stroke="#fff" stroke-width="0.8" stroke-linejoin="round"/>
<path d="M364.6,478.5 a3.0,3.0 0 0 1 3.0,-3.0 H374.9 c0.9,0 1.2,0.35 1.5,0.8 l3.5,4.1 c0.3,0.45 0.6,0.8 1.5,0.8 h11.2 c0.9,0 1.2,-0.35 1.5,-0.8 l3.5,-4.1 c0.3,-0.45 0.6,-0.8 1.5,-0.8 H637 a3.0,3.0 0 0 1 3.0,3.0 V508.4 a3.0,3.0 0 0 1 -3.0,3.0 H411.5 c-0.9,0 -1.2,0.35 -1.5,0.8 l-3.5,4.1 c-0.3,0.45 -0.6,0.8 -1.5,0.8 h-11.2 c-0.9,0 -1.2,-0.35 -1.5,-0.8 l-3.5,-4.1 c-0.3,-0.45 -0.6,-0.8 -1.5,-0.8 H379.5 a2.5,2.5 0 0 0 -2.5,2.5 V526.8 a2.5,2.5 0 0 0 2.5,2.5 H387.3 c0.9,0 1.2,0.35 1.5,0.8 l3.5,4.1 c0.3,0.45 0.6,0.8 1.5,0.8 h11.2 c0.9,0 1.2,-0.35 1.5,-0.8 l3.5,-4.1 c0.3,-0.45 0.6,-0.8 1.5,-0.8 H637 a3.0,3.0 0 0 1 3.0,3.0 V550.3 a3.0,3.0 0 0 1 -3.0,3.0 H399.1 c-0.9,0 -1.2,0.35 -1.5,0.8 l-3.5,4.1 c-0.3,0.45 -0.6,0.8 -1.5,0.8 h-11.2 c-0.9,0 -1.2,-0.35 -1.5,-0.8 l-3.5,-4.1 c-0.3,-0.45 -0.6,-0.8 -1.5,-0.8 H367.6 a3.0,3.0 0 0 1 -3.0,-3.0 Z" fill="#FFAB19" stroke="#CF8B17" stroke-width="1" stroke-opacity="0.55"/>
<rect x="400.5" y="481.6" width="116.1" height="24.2" rx="4" fill="#FFAB19" stroke="#CF8B17" stroke-opacity="0.45" stroke-width="1"/>
<text x="409.6" y="497.9" font-size="12" fill="#fff" font-weight="bold" text-anchor="start" textLength="83.5" lengthAdjust="spacingAndGlyphs" >以下の間に実行</text>
<path d="M499.6,492.1 L506.6,492.1 L503.1,495.7 Z" fill="#fff" stroke="#fff" stroke-width="1" stroke-linejoin="round"/>
<path d="M523.2,493.7 L535.3,481.6 H546.4 L558.5,493.7 L546.4,505.8 H535.3 Z" fill="#CF8B17"/>
<text x="565.2" y="498.1" font-size="12" fill="#fff" font-weight="bold" text-anchor="start" textLength="59.8" lengthAdjust="spacingAndGlyphs" >を繰り返し</text>
<path d="M364.6,571.7 a3.0,3.0 0 0 1 3.0,-3.0 H374.9 c0.9,0 1.2,0.35 1.5,0.8 l3.5,4.1 c0.3,0.45 0.6,0.8 1.5,0.8 h11.2 c0.9,0 1.2,-0.35 1.5,-0.8 l3.5,-4.1 c0.3,-0.45 0.6,-0.8 1.5,-0.8 H566.2 a3.0,3.0 0 0 1 3.0,3.0 V602.1 a3.0,3.0 0 0 1 -3.0,3.0 H411.5 c-0.9,0 -1.2,0.35 -1.5,0.8 l-3.5,4.1 c-0.3,0.45 -0.6,0.8 -1.5,0.8 h-11.2 c-0.9,0 -1.2,-0.35 -1.5,-0.8 l-3.5,-4.1 c-0.3,-0.45 -0.6,-0.8 -1.5,-0.8 H379.5 a2.5,2.5 0 0 0 -2.5,2.5 V619.7 a2.5,2.5 0 0 0 2.5,2.5 H387.3 c0.9,0 1.2,0.35 1.5,0.8 l3.5,4.1 c0.3,0.45 0.6,0.8 1.5,0.8 h11.2 c0.9,0 1.2,-0.35 1.5,-0.8 l3.5,-4.1 c0.3,-0.45 0.6,-0.8 1.5,-0.8 H566.2 a3.0,3.0 0 0 1 3.0,3.0 V643.5 a3.0,3.0 0 0 1 -3.0,3.0 H399.1 c-0.9,0 -1.2,0.35 -1.5,0.8 l-3.5,4.1 c-0.3,0.45 -0.6,0.8 -1.5,0.8 h-11.2 c-0.9,0 -1.2,-0.35 -1.5,-0.8 l-3.5,-4.1 c-0.3,-0.45 -0.6,-0.8 -1.5,-0.8 H367.6 a3.0,3.0 0 0 1 -3.0,-3.0 Z" fill="#FFAB19" stroke="#CF8B17" stroke-width="1" stroke-opacity="0.55"/>
<path d="M401.3,586.9 L413.4,574.8 H424.2 L436.3,586.9 L424.2,599 H413.4 Z" fill="#CF8B17"/>
<text x="443.2" y="591.3" font-size="12" fill="#fff" font-weight="bold" text-anchor="start" textLength="119.1" lengthAdjust="spacingAndGlyphs" >の場合は、以下を実行</text>
</g>
<rect x="595" y="125.8" width="5.8" height="377.5" rx="2.9" fill="#cbcbcb"/>
<path d="M630.6,195 a3.0,3.0 0 0 1 3.0,-3.0 H640.9 c0.9,0 1.2,0.35 1.5,0.8 l3.5,4.1 c0.3,0.45 0.6,0.8 1.5,0.8 h11.2 c0.9,0 1.2,-0.35 1.5,-0.8 l3.5,-4.1 c0.3,-0.45 0.6,-0.8 1.5,-0.8 H960.6 a3.0,3.0 0 0 1 3.0,3.0 V232 a3.0,3.0 0 0 1 -3.0,3.0 H677.1 c-0.9,0 -1.2,0.35 -1.5,0.8 l-3.5,4.1 c-0.3,0.45 -0.6,0.8 -1.5,0.8 h-11.2 c-0.9,0 -1.2,-0.35 -1.5,-0.8 l-3.5,-4.1 c-0.3,-0.45 -0.6,-0.8 -1.5,-0.8 H645.1 a2.5,2.5 0 0 0 -2.5,2.5 V375.3 a2.5,2.5 0 0 0 2.5,2.5 H652.9 c0.9,0 1.2,0.35 1.5,0.8 l3.5,4.1 c0.3,0.45 0.6,0.8 1.5,0.8 h11.2 c0.9,0 1.2,-0.35 1.5,-0.8 l3.5,-4.1 c0.3,-0.45 0.6,-0.8 1.5,-0.8 H960.6 a3.0,3.0 0 0 1 3.0,3.0 V400.3 a3.0,3.0 0 0 1 -3.0,3.0 H677.1 c-0.9,0 -1.2,0.35 -1.5,0.8 l-3.5,4.1 c-0.3,0.45 -0.6,0.8 -1.5,0.8 h-11.2 c-0.9,0 -1.2,-0.35 -1.5,-0.8 l-3.5,-4.1 c-0.3,-0.45 -0.6,-0.8 -1.5,-0.8 H645.1 a2.5,2.5 0 0 0 -2.5,2.5 V436.5 a2.5,2.5 0 0 0 2.5,2.5 H652.9 c0.9,0 1.2,0.35 1.5,0.8 l3.5,4.1 c0.3,0.45 0.6,0.8 1.5,0.8 h11.2 c0.9,0 1.2,-0.35 1.5,-0.8 l3.5,-4.1 c0.3,-0.45 0.6,-0.8 1.5,-0.8 H960.6 a3.0,3.0 0 0 1 3.0,3.0 V459.3 a3.0,3.0 0 0 1 -3.0,3.0 H665.1 c-0.9,0 -1.2,0.35 -1.5,0.8 l-3.5,4.1 c-0.3,0.45 -0.6,0.8 -1.5,0.8 h-11.2 c-0.9,0 -1.2,-0.35 -1.5,-0.8 l-3.5,-4.1 c-0.3,-0.45 -0.6,-0.8 -1.5,-0.8 H633.6 a3.0,3.0 0 0 1 -3.0,-3.0 Z" fill="#FFAB19" stroke="#CF8B17" stroke-width="1" stroke-opacity="0.55"/>
<path d="M642.6,406.3 a3.0,3.0 0 0 1 3.0,-3.0 H652.9 c0.9,0 1.2,0.35 1.5,0.8 l3.5,4.1 c0.3,0.45 0.6,0.8 1.5,0.8 h11.2 c0.9,0 1.2,-0.35 1.5,-0.8 l3.5,-4.1 c0.3,-0.45 0.6,-0.8 1.5,-0.8 H918 a3.0,3.0 0 0 1 3.0,3.0 V436 a3.0,3.0 0 0 1 -3.0,3.0 H677.1 c-0.9,0 -1.2,0.35 -1.5,0.8 l-3.5,4.1 c-0.3,0.45 -0.6,0.8 -1.5,0.8 h-11.2 c-0.9,0 -1.2,-0.35 -1.5,-0.8 l-3.5,-4.1 c-0.3,-0.45 -0.6,-0.8 -1.5,-0.8 H645.6 a3.0,3.0 0 0 1 -3.0,-3.0 Z" fill="#4C97FF" stroke="#3373CC" stroke-width="1" stroke-opacity="0.55"/>
<text x="650.3" y="425.55" font-size="12" fill="#fff" font-weight="bold" text-anchor="start" textLength="22.5" lengthAdjust="spacingAndGlyphs" >ピン</text>
<rect x="678.8" y="409.15" width="44.1" height="24" rx="4" fill="#4C97FF" stroke="#3373CC" stroke-opacity="0.45" stroke-width="1"/>
<text x="687.2" y="425.35" font-size="12" fill="#fff" font-weight="bold" text-anchor="start" textLength="12.6" lengthAdjust="spacingAndGlyphs" >11</text>
<path d="M705.9,419.55 L712.9,419.55 L709.4,423.15 Z" fill="#fff" stroke="#fff" stroke-width="1" stroke-linejoin="round"/>
<text x="730.4" y="425.55" font-size="12" fill="#fff" font-weight="bold" text-anchor="start" textLength="57.5" lengthAdjust="spacingAndGlyphs" >でサーボを</text>
<rect x="795.2" y="409.15" width="29.3" height="24" rx="12" fill="#fff" stroke="#3373CC" stroke-opacity="0.5" stroke-width="1"/>
<text x="810.45" y="425.45" font-size="12" fill="#575E75" font-weight="normal" text-anchor="middle" >0</text>
<text x="831" y="425.55" font-size="12" fill="#fff" font-weight="bold" text-anchor="start" textLength="84.5" lengthAdjust="spacingAndGlyphs" >の角度まで回転</text>
<path d="M642.6,345.1 a3.0,3.0 0 0 1 3.0,-3.0 H652.9 c0.9,0 1.2,0.35 1.5,0.8 l3.5,4.1 c0.3,0.45 0.6,0.8 1.5,0.8 h11.2 c0.9,0 1.2,-0.35 1.5,-0.8 l3.5,-4.1 c0.3,-0.45 0.6,-0.8 1.5,-0.8 H803.2 a3.0,3.0 0 0 1 3.0,3.0 V374.8 a3.0,3.0 0 0 1 -3.0,3.0 H677.1 c-0.9,0 -1.2,0.35 -1.5,0.8 l-3.5,4.1 c-0.3,0.45 -0.6,0.8 -1.5,0.8 h-11.2 c-0.9,0 -1.2,-0.35 -1.5,-0.8 l-3.5,-4.1 c-0.3,-0.45 -0.6,-0.8 -1.5,-0.8 H645.6 a3.0,3.0 0 0 1 -3.0,-3.0 Z" fill="#FFAB19" stroke="#CF8B17" stroke-width="1" stroke-opacity="0.55"/>
<rect x="679.2" y="347.95" width="29.8" height="24" rx="12" fill="#fff" stroke="#CF8B17" stroke-opacity="0.5" stroke-width="1"/>
<text x="694.7" y="364.25" font-size="12" fill="#575E75" font-weight="normal" text-anchor="middle" >1</text>
<rect x="714.7" y="347.95" width="43.8" height="24" rx="4" fill="#FFAB19" stroke="#CF8B17" stroke-opacity="0.45" stroke-width="1"/>
<text x="722.9" y="364.15" font-size="12" fill="#fff" font-weight="bold" text-anchor="start" textLength="12.3" lengthAdjust="spacingAndGlyphs" >秒</text>
<path d="M741.5,358.35 L748.5,358.35 L745,361.95 Z" fill="#fff" stroke="#fff" stroke-width="1" stroke-linejoin="round"/>
<text x="765.1" y="364.35" font-size="12" fill="#fff" font-weight="bold" text-anchor="start" textLength="35.5" lengthAdjust="spacingAndGlyphs" >を待機</text>
<path d="M642.6,309.4 a3.0,3.0 0 0 1 3.0,-3.0 H652.9 c0.9,0 1.2,0.35 1.5,0.8 l3.5,4.1 c0.3,0.45 0.6,0.8 1.5,0.8 h11.2 c0.9,0 1.2,-0.35 1.5,-0.8 l3.5,-4.1 c0.3,-0.45 0.6,-0.8 1.5,-0.8 H918 a3.0,3.0 0 0 1 3.0,3.0 V339.1 a3.0,3.0 0 0 1 -3.0,3.0 H677.1 c-0.9,0 -1.2,0.35 -1.5,0.8 l-3.5,4.1 c-0.3,0.45 -0.6,0.8 -1.5,0.8 h-11.2 c-0.9,0 -1.2,-0.35 -1.5,-0.8 l-3.5,-4.1 c-0.3,-0.45 -0.6,-0.8 -1.5,-0.8 H645.6 a3.0,3.0 0 0 1 -3.0,-3.0 Z" fill="#4C97FF" stroke="#3373CC" stroke-width="1" stroke-opacity="0.55"/>
<text x="650.3" y="328.65" font-size="12" fill="#fff" font-weight="bold" text-anchor="start" textLength="22.5" lengthAdjust="spacingAndGlyphs" >ピン</text>
<rect x="678.8" y="312.25" width="44.1" height="24" rx="4" fill="#4C97FF" stroke="#3373CC" stroke-opacity="0.45" stroke-width="1"/>
<text x="687.2" y="328.45" font-size="12" fill="#fff" font-weight="bold" text-anchor="start" textLength="12.6" lengthAdjust="spacingAndGlyphs" >11</text>
<path d="M705.9,322.65 L712.9,322.65 L709.4,326.25 Z" fill="#fff" stroke="#fff" stroke-width="1" stroke-linejoin="round"/>
<text x="730.4" y="328.65" font-size="12" fill="#fff" font-weight="bold" text-anchor="start" textLength="57.5" lengthAdjust="spacingAndGlyphs" >でサーボを</text>
<rect x="795.2" y="312.25" width="29.3" height="24" rx="12" fill="#fff" stroke="#3373CC" stroke-opacity="0.5" stroke-width="1"/>
<text x="810.45" y="328.55" font-size="12" fill="#575E75" font-weight="normal" text-anchor="middle" >0</text>
<text x="831" y="328.65" font-size="12" fill="#fff" font-weight="bold" text-anchor="start" textLength="84.5" lengthAdjust="spacingAndGlyphs" >の角度まで回転</text>
<path d="M642.6,273.7 a3.0,3.0 0 0 1 3.0,-3.0 H652.9 c0.9,0 1.2,0.35 1.5,0.8 l3.5,4.1 c0.3,0.45 0.6,0.8 1.5,0.8 h11.2 c0.9,0 1.2,-0.35 1.5,-0.8 l3.5,-4.1 c0.3,-0.45 0.6,-0.8 1.5,-0.8 H803.2 a3.0,3.0 0 0 1 3.0,3.0 V303.4 a3.0,3.0 0 0 1 -3.0,3.0 H677.1 c-0.9,0 -1.2,0.35 -1.5,0.8 l-3.5,4.1 c-0.3,0.45 -0.6,0.8 -1.5,0.8 h-11.2 c-0.9,0 -1.2,-0.35 -1.5,-0.8 l-3.5,-4.1 c-0.3,-0.45 -0.6,-0.8 -1.5,-0.8 H645.6 a3.0,3.0 0 0 1 -3.0,-3.0 Z" fill="#FFAB19" stroke="#CF8B17" stroke-width="1" stroke-opacity="0.55"/>
<rect x="679.2" y="276.55" width="29.8" height="24" rx="12" fill="#fff" stroke="#CF8B17" stroke-opacity="0.5" stroke-width="1"/>
<text x="694.7" y="292.85" font-size="12" fill="#575E75" font-weight="normal" text-anchor="middle" >4</text>
<rect x="714.7" y="276.55" width="43.8" height="24" rx="4" fill="#FFAB19" stroke="#CF8B17" stroke-opacity="0.45" stroke-width="1"/>
<text x="722.9" y="292.75" font-size="12" fill="#fff" font-weight="bold" text-anchor="start" textLength="12.3" lengthAdjust="spacingAndGlyphs" >秒</text>
<path d="M741.5,286.95 L748.5,286.95 L745,290.55 Z" fill="#fff" stroke="#fff" stroke-width="1" stroke-linejoin="round"/>
<text x="765.1" y="292.95" font-size="12" fill="#fff" font-weight="bold" text-anchor="start" textLength="35.5" lengthAdjust="spacingAndGlyphs" >を待機</text>
<path d="M642.6,238 a3.0,3.0 0 0 1 3.0,-3.0 H652.9 c0.9,0 1.2,0.35 1.5,0.8 l3.5,4.1 c0.3,0.45 0.6,0.8 1.5,0.8 h11.2 c0.9,0 1.2,-0.35 1.5,-0.8 l3.5,-4.1 c0.3,-0.45 0.6,-0.8 1.5,-0.8 H918 a3.0,3.0 0 0 1 3.0,3.0 V267.7 a3.0,3.0 0 0 1 -3.0,3.0 H677.1 c-0.9,0 -1.2,0.35 -1.5,0.8 l-3.5,4.1 c-0.3,0.45 -0.6,0.8 -1.5,0.8 h-11.2 c-0.9,0 -1.2,-0.35 -1.5,-0.8 l-3.5,-4.1 c-0.3,-0.45 -0.6,-0.8 -1.5,-0.8 H645.6 a3.0,3.0 0 0 1 -3.0,-3.0 Z" fill="#4C97FF" stroke="#3373CC" stroke-width="1" stroke-opacity="0.55"/>
<text x="650.3" y="257.25" font-size="12" fill="#fff" font-weight="bold" text-anchor="start" textLength="22.5" lengthAdjust="spacingAndGlyphs" >ピン</text>
<rect x="678.8" y="240.85" width="44.1" height="24" rx="4" fill="#4C97FF" stroke="#3373CC" stroke-opacity="0.45" stroke-width="1"/>
<text x="687.2" y="257.05" font-size="12" fill="#fff" font-weight="bold" text-anchor="start" textLength="12.6" lengthAdjust="spacingAndGlyphs" >11</text>
<path d="M705.9,251.25 L712.9,251.25 L709.4,254.85 Z" fill="#fff" stroke="#fff" stroke-width="1" stroke-linejoin="round"/>
<text x="730.4" y="257.25" font-size="12" fill="#fff" font-weight="bold" text-anchor="start" textLength="57.5" lengthAdjust="spacingAndGlyphs" >でサーボを</text>
<rect x="795.2" y="240.85" width="29.3" height="24" rx="12" fill="#fff" stroke="#3373CC" stroke-opacity="0.5" stroke-width="1"/>
<text x="810.45" y="257.15" font-size="12" fill="#575E75" font-weight="normal" text-anchor="middle" >90</text>
<text x="831" y="257.25" font-size="12" fill="#fff" font-weight="bold" text-anchor="start" textLength="84.5" lengthAdjust="spacingAndGlyphs" >の角度まで回転</text>
<text x="637.4" y="395.9" font-size="12" fill="#fff" font-weight="bold" text-anchor="start" textLength="143.8" lengthAdjust="spacingAndGlyphs" >その他の場合は以下を実行</text>
<path d="M667.3,213.8 L684.4,195.7 H813.7 L832.1,213.8 L813.7,231.9 H684.4 Z" fill="#59C059" stroke="#389438" stroke-width="1" stroke-opacity="0.7"/>
<rect x="685" y="198.6" width="51.6" height="30.5" rx="15.25" fill="#D65CD6" stroke="#A63FA6" stroke-opacity="0.5"/>
<text x="710.8" y="218.2" font-size="12" fill="#fff" font-weight="bold" text-anchor="middle" textLength="29" lengthAdjust="spacingAndGlyphs" >value</text>
<rect x="742.3" y="202" width="38.2" height="24.2" rx="4" fill="#59C059" stroke="#389438" stroke-opacity="0.45" stroke-width="1"/>
<text x="750" y="218.3" font-size="12" fill="#fff" font-weight="bold" text-anchor="start" >&lt;</text>
<path d="M763.5,212.5 L770.5,212.5 L767,216.1 Z" fill="#fff" stroke="#fff" stroke-width="1" stroke-linejoin="round"/>
<rect x="786.7" y="202.5" width="29.5" height="23.7" rx="11.85" fill="#fff" stroke="#389438" stroke-opacity="0.5" stroke-width="1"/>
<text x="802.05" y="218.65" font-size="12" fill="#575E75" font-weight="normal" text-anchor="middle" >20</text>
<text x="838.3" y="218.4" font-size="12" fill="#fff" font-weight="bold" text-anchor="start" textLength="119.3" lengthAdjust="spacingAndGlyphs" >の場合は、以下を実行</text>
<path d="M630.6,160 a3.0,3.0 0 0 1 3.0,-3.0 H640.9 c0.9,0 1.2,0.35 1.5,0.8 l3.5,4.1 c0.3,0.45 0.6,0.8 1.5,0.8 h11.2 c0.9,0 1.2,-0.35 1.5,-0.8 l3.5,-4.1 c0.3,-0.45 0.6,-0.8 1.5,-0.8 H1047.6 a3.0,3.0 0 0 1 3.0,3.0 V189 a3.0,3.0 0 0 1 -3.0,3.0 H665.1 c-0.9,0 -1.2,0.35 -1.5,0.8 l-3.5,4.1 c-0.3,0.45 -0.6,0.8 -1.5,0.8 h-11.2 c-0.9,0 -1.2,-0.35 -1.5,-0.8 l-3.5,-4.1 c-0.3,-0.45 -0.6,-0.8 -1.5,-0.8 H633.6 a3.0,3.0 0 0 1 -3.0,-3.0 Z" fill="#D65CD6" stroke="#A63FA6" stroke-width="1" stroke-opacity="0.55"/>
<rect x="666.9" y="162.6" width="60.4" height="24" rx="4" fill="#D65CD6" stroke="#A63FA6" stroke-opacity="0.45" stroke-width="1"/>
<text x="675.1" y="178.8" font-size="12" fill="#fff" font-weight="bold" text-anchor="start" textLength="29" lengthAdjust="spacingAndGlyphs" >value</text>
<path d="M710.3,173 L717.3,173 L713.8,176.6 Z" fill="#fff" stroke="#fff" stroke-width="1" stroke-linejoin="round"/>
<text x="733.9" y="179.2" font-size="12" fill="#fff" font-weight="bold" text-anchor="start" textLength="10.5" lengthAdjust="spacingAndGlyphs" >を</text>
<rect x="751.3" y="159.8" width="300" height="30.2" rx="15.1" fill="#9966FF" stroke="#774DCB" stroke-opacity="0.6"/>
<text x="762.6" y="179.3" font-size="12" fill="#fff" font-weight="bold" text-anchor="start" textLength="59.8" lengthAdjust="spacingAndGlyphs" >トリガ ピン</text>
<rect x="829.7" y="162.8" width="38.1" height="24.1" rx="4" fill="#9966FF" stroke="#774DCB" stroke-opacity="0.45" stroke-width="1"/>
<text x="838" y="179.05" font-size="12" fill="#fff" font-weight="bold" text-anchor="start" >9</text>
<path d="M850.8,173.25 L857.8,173.25 L854.3,176.85 Z" fill="#fff" stroke="#fff" stroke-width="1" stroke-linejoin="round"/>
<text x="874" y="179.3" font-size="12" fill="#fff" font-weight="bold" text-anchor="start" textLength="75" lengthAdjust="spacingAndGlyphs" >、エコー ピン</text>
<rect x="955.7" y="162.8" width="54.3" height="24.1" rx="4" fill="#9966FF" stroke="#774DCB" stroke-opacity="0.45" stroke-width="1"/>
<text x="961" y="179.05" font-size="12" fill="#fff" font-weight="bold" text-anchor="start" >10</text>
<circle cx="962.8" cy="459.7" r="16.8" fill="#fbfbfb" stroke="#d9d9d9" stroke-width="1.6"/>
<circle cx="962.8" cy="502.6" r="16.8" fill="#fbfbfb" stroke="#d9d9d9" stroke-width="1.6"/>
<circle cx="962.8" cy="546.5" r="16.8" fill="#fbfbfb" stroke="#d9d9d9" stroke-width="1.6"/>
<circle cx="962.6" cy="459.2" r="6.3" fill="none" stroke="#7b8498" stroke-width="1.6"/>
<path d="M967.3,463.8 L970.4,466.9" stroke="#7b8498" stroke-width="1.8" stroke-linecap="round"/>
<path d="M959.8,459.2 H965.4" stroke="#7b8498" stroke-width="1.7"/>
<path d="M962.6,456.4 V462" stroke="#7b8498" stroke-width="1.7"/>
<circle cx="962.6" cy="502.1" r="6.3" fill="none" stroke="#7b8498" stroke-width="1.6"/>
<path d="M967.3,506.7 L970.4,509.8" stroke="#7b8498" stroke-width="1.8" stroke-linecap="round"/>
<path d="M959.8,502.1 H965.4" stroke="#7b8498" stroke-width="1.7"/>
<rect x="958.3" y="543.2" width="9.7" height="1.9" fill="#7b8498"/>
<rect x="958.3" y="549.8" width="9.7" height="1.9" fill="#7b8498"/>
<path d="M938.5,586.4 L941.4,583.1 H956.7 L959.3,586.4 Z" fill="#c8c8c8"/>
<rect x="928.1" y="586.2" width="41.8" height="5.5" fill="#c8c8c8"/>
<path d="M931,594.8 H967 V633.3 q0,3.5 -3.5,3.5 H934.5 q-3.5,0 -3.5,-3.5 Z" fill="#c8c8c8"/>
</svg></body></html>
